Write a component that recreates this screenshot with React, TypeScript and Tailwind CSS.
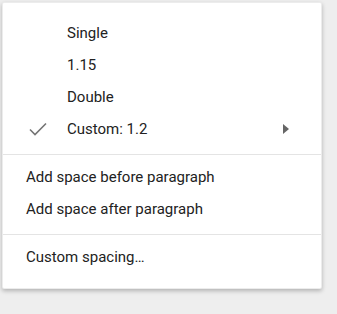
const spacingOptions = [
  { label: 'Single' },
  { label: '1.15' },
  { label: 'Double' },
  { label: 'Custom: 1.2', checked: true, submenu: true },
]

function Row({ label, checked, submenu, indent }: { label: string; checked?: boolean; submenu?: boolean; indent?: boolean }) {
  return (
    <div className="flex items-center h-8 pr-[32px]">
      {indent ? (
        <div className="w-[64px] pl-[26px] flex items-center shrink-0">
          {checked && (
            <svg width="18" height="14" viewBox="0 0 18 14" fill="none">
              <path d="M1 7.5L6 12.5L17 1.5" stroke="#757575" strokeWidth="1.6" />
            </svg>
          )}
        </div>
      ) : (
        <div className="w-[23px] shrink-0" />
      )}
      <span className="flex-1 text-[15px] text-[#222]">{label}</span>
      {submenu && (
        <svg width="6" height="10" viewBox="0 0 6 10" className="shrink-0">
          <path d="M0 0L6 5L0 10Z" fill="#666" />
        </svg>
      )}
    </div>
  )
}

export default function App() {
  return (
    <div className="w-[337px] h-[314px] bg-[#eeeeee] pt-[2px] pl-[2px]" style={{ fontFamily: 'Roboto, "Liberation Sans", sans-serif' }}>
      <div className="w-[320px] bg-white pt-[14px] pb-[15px] rounded-[2px] shadow-[0_2px_4px_rgba(0,0,0,0.25)] border border-[#e0e0e0]/60">
        {spacingOptions.map((o) => (
          <Row key={o.label} {...o} indent />
        ))}
        <div className="h-px bg-[#e4e4e4] mt-[9px] mb-[6px]" />
        <Row label="Add space before paragraph" />
        <Row label="Add space after paragraph" />
        <div className="h-px bg-[#e4e4e4] mt-[9px] mb-[6px]" />
        <Row label="Custom spacing…" />
      </div>
    </div>
  )
}
